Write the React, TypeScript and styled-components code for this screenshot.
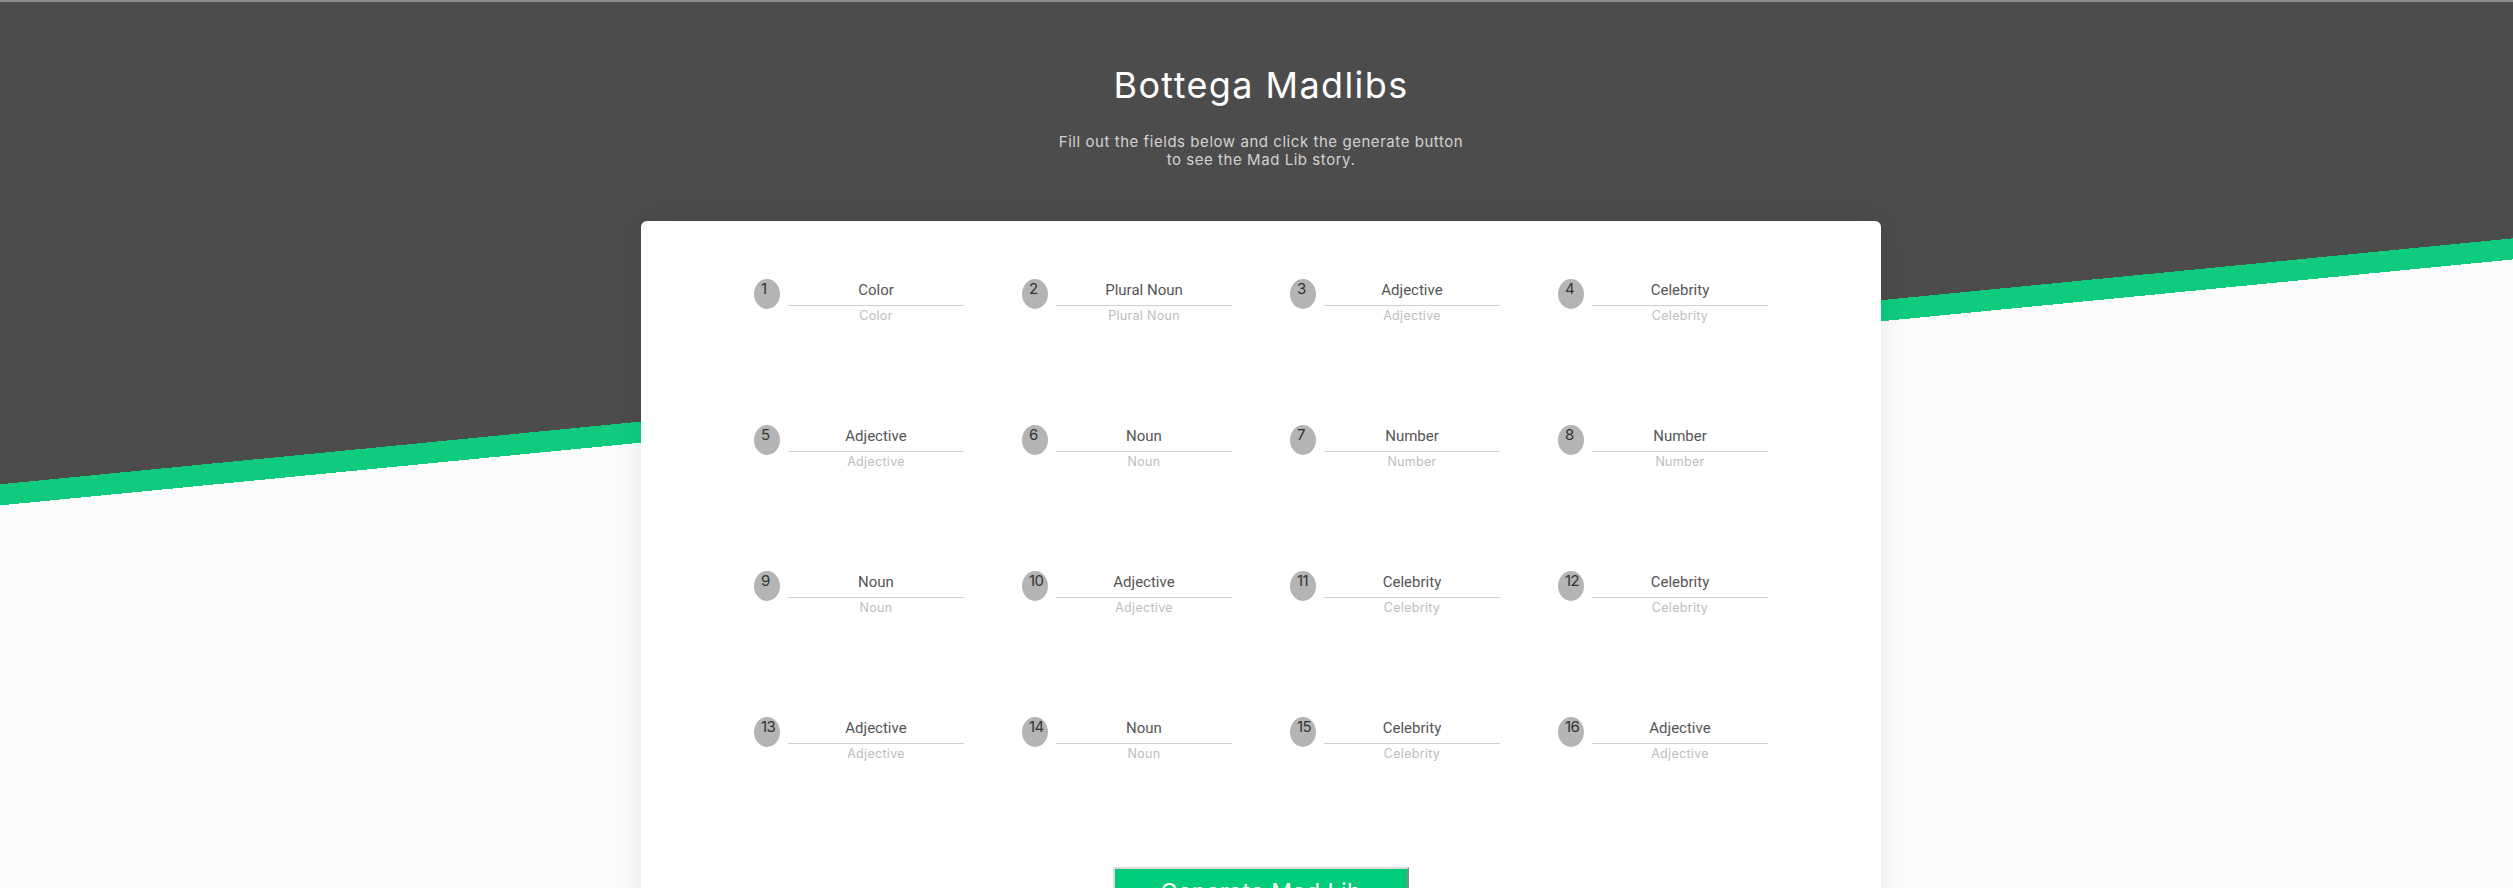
import React from 'react';
import styled, { createGlobalStyle } from 'styled-components';

interface Field {
  label: string;
}

const fields: Field[] = [
  { label: 'Color' },
  { label: 'Plural Noun' },
  { label: 'Adjective' },
  { label: 'Celebrity' },
  { label: 'Adjective' },
  { label: 'Noun' },
  { label: 'Number' },
  { label: 'Number' },
  { label: 'Noun' },
  { label: 'Adjective' },
  { label: 'Celebrity' },
  { label: 'Celebrity' },
  { label: 'Adjective' },
  { label: 'Noun' },
  { label: 'Celebrity' },
  { label: 'Adjective' },
];

const GlobalStyle = createGlobalStyle`
  html, body {
    margin: 0;
    padding: 0;
    background: #fbfbfb;
  }
  * {
    box-sizing: border-box;
  }
`;

const Page = styled.div`
  min-height: 100vh;
  border-top: 2px solid #8c8c8c;
  padding: 61px 0 60px 9px;
  display: flex;
  flex-direction: column;
  align-items: center;
  font-family: Inter, 'Open Sans', sans-serif;
  background:
    linear-gradient(174.41deg, #4c4c4c 480px, #0fcb7e 480px, #0fcb7e 501px, transparent 501px)
      top left / 100% 886px no-repeat,
    #fbfbfb;
`;

const Title = styled.h1`
  margin: 0;
  font-size: 36px;
  line-height: 44px;
  font-weight: 400;
  letter-spacing: 1.4px;
  color: #ffffff;
`;

const Subtitle = styled.p`
  margin: 26px 0 0;
  font-size: 15px;
  line-height: 18px;
  letter-spacing: 0.55px;
  color: #d2d2d2;
  text-align: center;
`;

const Card = styled.div`
  margin-top: 52px;
  width: 1240px;
  padding: 58px 0 80px;
  background: #ffffff;
  border-radius: 6px;
  box-shadow: 0 0 30px rgba(0, 0, 0, 0.07);
  display: flex;
  flex-direction: column;
  align-items: center;
`;

const FieldGrid = styled.div`
  display: grid;
  grid-template-columns: repeat(4, 210px);
  grid-auto-rows: 146px;
  column-gap: 58px;
`;

const FieldItem = styled.div`
  display: flex;
  align-items: flex-start;
  gap: 8px;
`;

const Badge = styled.div`
  width: 26px;
  height: 30px;
  border-radius: 50%;
  background: #b4b4b4;
  color: #333333;
  font-size: 15px;
  line-height: 16px;
  padding: 2px 0 0 7px;
  letter-spacing: -0.5px;
`;

const InputColumn = styled.div`
  width: 176px;
  display: flex;
  flex-direction: column;
  align-items: center;
`;

const WordInput = styled.input`
  width: 100%;
  height: 27px;
  border: none;
  border-bottom: 1px solid #cfcfcf;
  background: transparent;
  text-align: center;
  font-family: Roboto, 'Liberation Sans', sans-serif;
  font-size: 15px;
  color: #444444;
  outline: none;
  padding: 0 0 4px;

  &::placeholder {
    color: #555555;
  }
`;

const Hint = styled.span`
  margin-top: 3px;
  font-size: 12.5px;
  line-height: 14px;
  letter-spacing: 0.3px;
  color: #bdbdbd;
`;

const GenerateButton = styled.button`
  margin-top: 4px;
  width: 296px;
  padding: 8px 0 14px;
  background: #00cc7a;
  color: #ffffff;
  font-family: Inter, 'Open Sans', sans-serif;
  font-size: 23px;
  line-height: 30px;
  letter-spacing: 0.5px;
  border-style: solid;
  border-width: 2px;
  border-color: #dcdcdc #8a8a8a #8a8a8a #dcdcdc;
  cursor: pointer;
`;

export default function App() {
  return (
    <>
      <GlobalStyle />
      <Page>
        <Title>Bottega Madlibs</Title>
        <Subtitle>
          Fill out the fields below and click the generate button
          <br />
          to see the Mad Lib story.
        </Subtitle>
        <Card>
          <FieldGrid>
            {fields.map((field, idx) => (
              <FieldItem key={idx}>
                <Badge>{idx + 1}</Badge>
                <InputColumn>
                  <WordInput placeholder={field.label} />
                  <Hint>{field.label}</Hint>
                </InputColumn>
              </FieldItem>
            ))}
          </FieldGrid>
          <GenerateButton>Generate Mad Lib</GenerateButton>
        </Card>
      </Page>
    </>
  );
}
